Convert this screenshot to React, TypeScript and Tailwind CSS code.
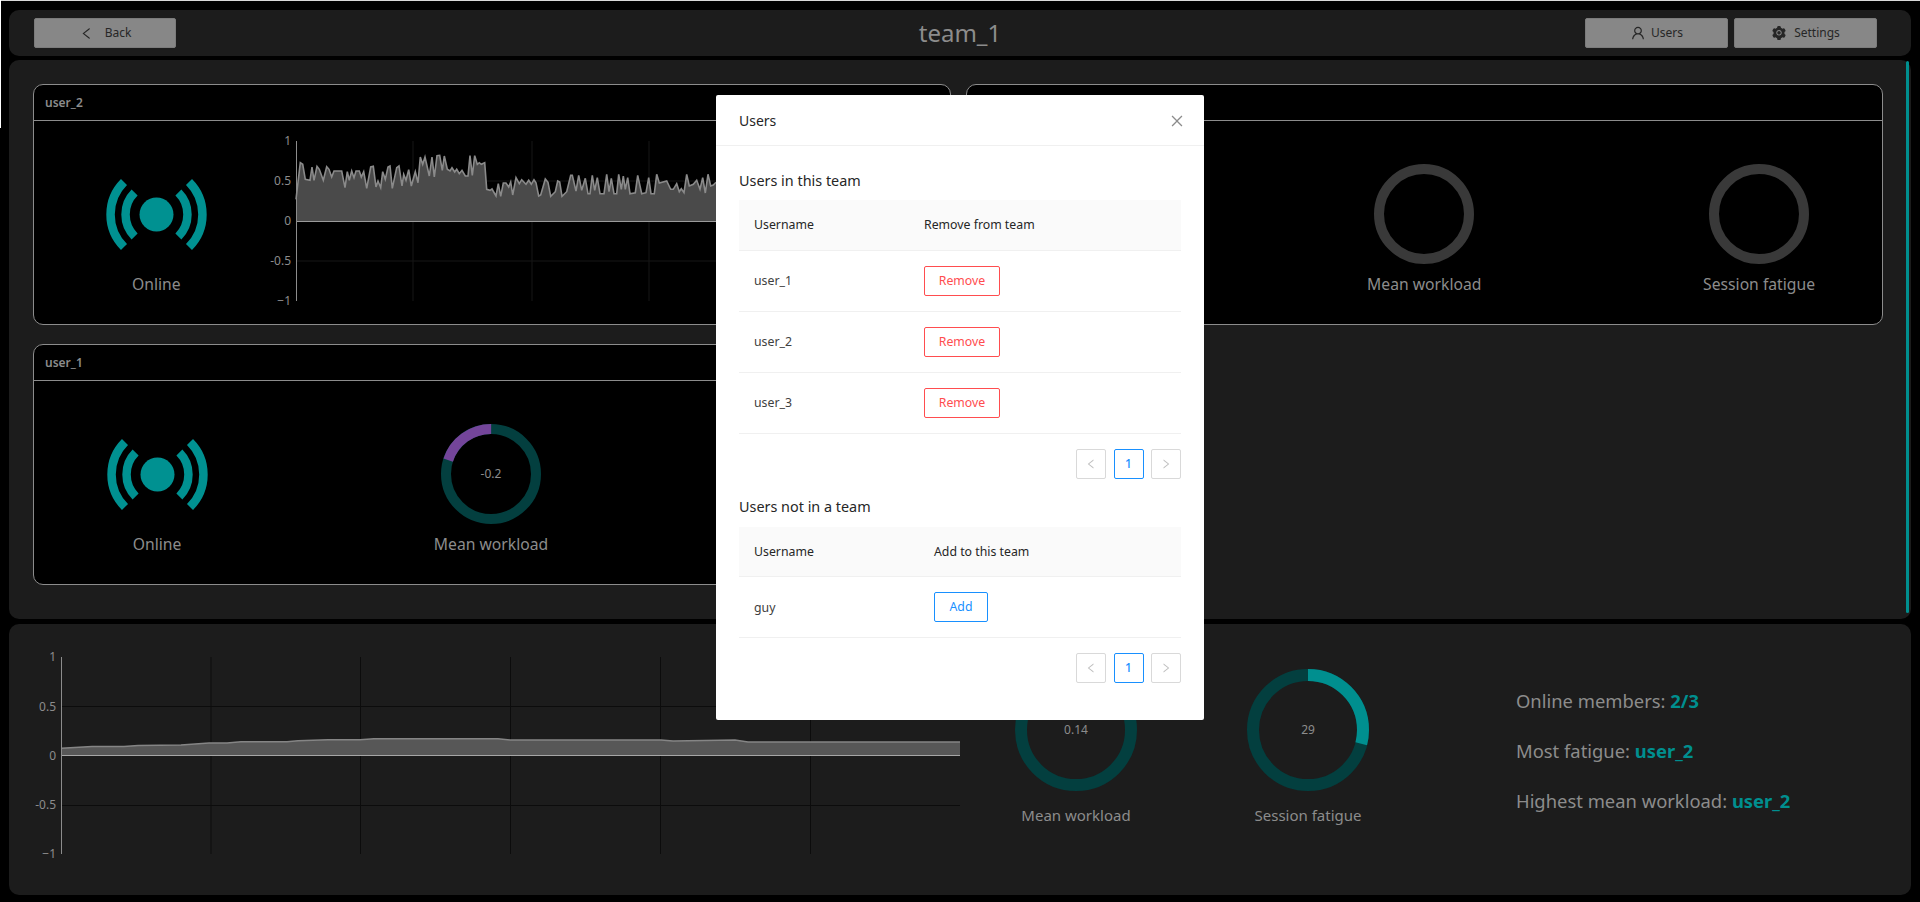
import { AiFillSetting, AiOutlineClose, AiOutlineLeft, AiOutlineRight, AiOutlineUser } from 'react-icons/ai'

const USER_2_TRACE = [
  [108, 235], [121, 125], [128, 130], [136, 175], [150, 178], [156, 138], [162, 178], [171, 136], [178, 145], [190, 178],
  [200, 137], [207, 145], [215, 168], [222, 150], [245, 150], [255, 200], [262, 152], [268, 178], [275, 150], [282, 170],
  [288, 150], [298, 150], [304, 168], [311, 152], [320, 202], [332, 138], [340, 136], [348, 198], [354, 180], [362, 200],
  [368, 152], [376, 175], [384, 138], [390, 135], [397, 202], [410, 140], [417, 135], [426, 195], [431, 160], [438, 178],
  [446, 146], [454, 195], [466, 152], [474, 185], [481, 108], [488, 130], [495, 108], [508, 165], [516, 108], [523, 168],
  [531, 104], [539, 103], [547, 148], [553, 105], [562, 145], [570, 150], [576, 140], [584, 153], [590, 145], [598, 158],
  [606, 148], [616, 165], [624, 165], [630, 104], [637, 163], [644, 104], [652, 130], [658, 125], [664, 130], [674, 125],
  [680, 205], [690, 208], [696, 204], [708, 225], [715, 188], [722, 226], [730, 186], [738, 186], [746, 198], [752, 183],
  [758, 222], [768, 170], [778, 188], [785, 176], [798, 190], [806, 178], [814, 190], [822, 176], [828, 185], [836, 225],
  [842, 222], [856, 174], [864, 184], [872, 226], [886, 212], [893, 180], [899, 183], [906, 226], [920, 212], [932, 163],
  [937, 163], [948, 210], [956, 163], [965, 208], [976, 172], [984, 218], [990, 218], [997, 163], [1004, 208], [1012, 170],
  [1020, 218], [1032, 218], [1040, 160], [1047, 212], [1054, 172], [1062, 218], [1070, 218], [1076, 160], [1084, 205], [1090, 165],
  [1096, 205], [1103, 170], [1110, 218], [1126, 215], [1133, 163], [1145, 218], [1158, 215], [1166, 170], [1173, 218], [1183, 218],
  [1190, 160], [1198, 186], [1220, 180], [1232, 205], [1240, 205], [1250, 188], [1258, 212], [1264, 203], [1272, 215], [1280, 160],
  [1288, 195], [1300, 190], [1310, 178], [1320, 205], [1328, 170], [1336, 216], [1344, 160], [1352, 195], [1360, 192], [1368, 184],
]

// traced in reference px, moved into the svg's own box below
const userPoints = USER_2_TRACE.map(([x, y]) => `${(260 + x / 3 - 279).toFixed(1)},${(120 + y / 3 - 121).toFixed(1)}`)
const userLine = userPoints.join(' ')
const userArea = `17.5,99 ${userLine} 437,99`

const TEAM_TRACE = [
  [61.5, 748.3], [92, 746.5], [124, 746.5], [138, 745.5], [181, 745], [209, 743], [227, 743], [241, 741.7], [287, 741.7], [298, 740.7],
  [328, 739.7], [360, 739.7], [374, 738.7], [498, 738.7], [510, 740], [661, 740], [673, 741], [735, 740], [748, 742], [960, 742],
]
const teamPoints = TEAM_TRACE.map(([x, y]) => `${(x - 9).toFixed(1)},${(y - 624).toFixed(1)}`)
const teamLine = teamPoints.join(' ')
const teamArea = `52.5,131 ${teamLine} 951,131`

function OnlineIcon() {
  return (
    <svg width="101" height="71" viewBox="0 0 101 71" fill="none" stroke="#009191" strokeWidth="8.5">
      <path d="M18 3A46 46 0 0 0 18 68" />
      <path d="M83 3A46 46 0 0 1 83 68" />
      <path d="M28.6 13.6A31 31 0 0 0 28.6 57.4" />
      <path d="M72.4 13.6A31 31 0 0 1 72.4 57.4" />
      <circle cx="50.5" cy="35.5" r="17" fill="#009191" stroke="none" />
    </svg>
  )
}

interface IRingProps {
  size: number
  thickness: number
  value?: number
  color?: string
  track?: string
  text?: string
}

function Ring({ size, thickness, value = 0, color = '#008f8f', track = '#033f3f', text }: IRingProps) {
  const r = (size - thickness) / 2
  const c = 2 * Math.PI * r
  const part = Math.abs(value) * c
  const rotate = value < 0 ? -90 - Math.abs(value) * 360 : -90
  return (
    <div className="relative" style={{ width: size, height: size }}>
      <svg width={size} height={size} fill="none">
        <circle cx={size / 2} cy={size / 2} r={r} stroke={track} strokeWidth={thickness} />
        {value !== 0 && (
          <circle
            cx={size / 2}
            cy={size / 2}
            r={r}
            stroke={color}
            strokeWidth={thickness}
            strokeDasharray={`${part} ${c}`}
            transform={`rotate(${rotate} ${size / 2} ${size / 2})`}
          />
        )}
      </svg>
      {text && (
        <div className="absolute inset-0 flex items-center justify-center text-[12px] text-[#8c8c8c]">{text}</div>
      )}
    </div>
  )
}

function Metric({ label, children }: { label: string; children: React.ReactNode }) {
  return (
    <div className="flex flex-col items-center pt-[43px]">
      <div className="h-[100px] flex items-center">{children}</div>
      <div className="mt-2 text-[15.7px] leading-6 text-[#8c8c8c] whitespace-nowrap">{label}</div>
    </div>
  )
}

function UserChart() {
  return (
    <svg width="671" height="203" className="block mt-px text-[12px] overflow-visible">
      {[134, 253, 370, 488].map((x) => (
        <line key={x} x1={x} x2={x} y1="19" y2="179" stroke="#161616" />
      ))}
      {[59, 139].map((y) => (
        <line key={y} x1="18" x2="671" y1={y} y2={y} stroke="#161616" />
      ))}
      <polygon points={userArea} fill="#4a4a4a" />
      <polyline points={userLine} fill="none" stroke="#8a8a8a" strokeWidth="1.6" />
      <line x1="17.5" x2="671" y1="99.5" y2="99.5" stroke="#9a9a9a" strokeWidth="1.2" />
      <line x1="17.5" x2="17.5" y1="19" y2="179" stroke="#8c8c8c" />
      {[['1', 23], ['0.5', 63], ['0', 103], ['-0.5', 143], ['−1', 183]].map(([t, y]) => (
        <text key={t} x="12" y={y} textAnchor="end" fill="#8c8c8c">
          {t}
        </text>
      ))}
    </svg>
  )
}

function TeamChart() {
  return (
    <svg width="951" height="271" className="block text-[12px] shrink-0">
      {[202, 351.5, 501.5, 651.5, 801.5].map((x) => (
        <line key={x} x1={x} x2={x} y1="33" y2="230" stroke="#0c0c0c" />
      ))}
      {[82.5, 181.5].map((y) => (
        <line key={y} x1="53" x2="951" y1={y} y2={y} stroke="#0c0c0c" />
      ))}
      <polygon points={teamArea} fill="#575757" />
      <polyline points={teamLine} fill="none" stroke="#858585" strokeWidth="1.5" />
      <line x1="52.5" x2="951" y1="131.5" y2="131.5" stroke="#a6a6a6" strokeWidth="1.2" />
      <line x1="52.5" x2="52.5" y1="33" y2="230" stroke="#8c8c8c" />
      {[['1', 37], ['0.5', 87], ['0', 136], ['-0.5', 185], ['−1', 234]].map(([t, y]) => (
        <text key={t} x="47" y={y} textAnchor="end" fill="#8c8c8c">
          {t}
        </text>
      ))}
    </svg>
  )
}

function Card({ title, children }: { title: string; children: React.ReactNode }) {
  return (
    <div className="h-[241px] rounded-[10px] border border-[#8c8c8c] bg-black">
      <div className="h-[35px] border-b border-[#8c8c8c] box-content pl-[11px] flex items-center text-[12px] font-semibold text-[#8c8c8c]">
        {title}
      </div>
      <div className="flex">{children}</div>
    </div>
  )
}

function TopButton({ icon, label, wide }: { icon: React.ReactNode; label: string; wide?: boolean }) {
  return (
    <button
      className={`h-[30px] ${wide ? 'w-[143px]' : 'w-[142px]'} rounded-[2px] border border-[#7b7b7b] bg-[#878787] flex items-center justify-center gap-2 text-[12px] text-[#262626]`}
    >
      {icon}
      {label}
    </button>
  )
}

function Pager() {
  return (
    <div className="flex justify-end gap-[7.5px] mt-[15px]">
      <div className="w-[30px] h-[30px] rounded-[2px] border border-[#d9d9d9] flex items-center justify-center text-[#bfbfbf] text-[12px]">
        <AiOutlineLeft />
      </div>
      <div className="w-[30px] h-[30px] rounded-[2px] border border-[#1890ff] flex items-center justify-center text-[#1890ff] text-[12px] font-medium">
        1
      </div>
      <div className="w-[30px] h-[30px] rounded-[2px] border border-[#d9d9d9] flex items-center justify-center text-[#bfbfbf] text-[12px]">
        <AiOutlineRight />
      </div>
    </div>
  )
}

interface IUsersTableProps {
  action: string
  firstCol: string
  rows: string[]
  button: string
  danger?: boolean
}

function UsersTable({ action, firstCol, rows, button, danger }: IUsersTableProps) {
  return (
    <table className="w-full table-fixed border-collapse text-[12.3px] text-[#262626]">
      <thead>
        <tr className="h-[50px] bg-[#fafafa] border-b border-[#f0f0f0]">
          <th className={`${firstCol} pl-[15px] pt-px text-left font-normal`}>Username</th>
          <th className="pt-px text-left font-normal">{action}</th>
        </tr>
      </thead>
      <tbody>
        {rows.map((row) => (
          <tr key={row} className="h-[61px] border-b border-[#f0f0f0]">
            <td className="pl-[15px] pt-[2px] text-[#404040]">{row}</td>
            <td>
              <button
                className={
                  danger
                    ? 'h-[30px] w-[76px] pt-px rounded-[2px] border border-[#ff4d4f] text-[#ff4d4f]'
                    : 'h-[30px] w-[54px] pt-px rounded-[2px] border border-[#1890ff] text-[#1890ff]'
                }
              >
                {button}
              </button>
            </td>
          </tr>
        ))}
      </tbody>
    </table>
  )
}

function UsersModal() {
  return (
    <div className="absolute left-[716px] top-[95px] w-[488px] h-[625px] bg-white rounded-[2px] text-[#262626]">
      <div className="h-[51px] border-b border-[#f0f0f0] px-[23px] flex items-center justify-between text-[14px]">
        Users
        <AiOutlineClose className="text-[#8c8c8c] text-[16px] mr-[-4px] mt-[2px]" />
      </div>
      <div className="px-[23px]">
        <div className="pt-[24px] mb-[8px] h-[22px] box-content leading-[22px] text-[14.4px]">Users in this team</div>
        <UsersTable
          action="Remove from team"
          firstCol="w-[185px]"
          rows={['user_1', 'user_2', 'user_3']}
          button="Remove"
          danger
        />
        <Pager />
        <div className="pt-[17px] mb-[9px] h-[22px] box-content leading-[22px] text-[14.4px]">Users not in a team</div>
        <UsersTable action="Add to this team" firstCol="w-[195px]" rows={['guy']} button="Add" />
        <Pager />
      </div>
    </div>
  )
}

export default function App() {
  return (
    <div className="relative w-full h-[902px] bg-black overflow-hidden pt-[10px] pl-[9px] pr-[9px] font-['Noto_Sans',sans-serif]">
      <div className="absolute left-0 top-0 w-full h-px bg-[#d8d8d8]" />
      <div className="absolute left-0 top-0 w-px h-[128px] bg-white" />

      <header className="h-[46px] rounded-[10px] bg-[#1c1c1c] px-[34px] grid grid-cols-[1fr_auto_1fr] items-center">
        <div className="ml-[-9px]">
          <TopButton icon={<AiOutlineLeft className="text-[15px] mr-[3px]" />} label="Back" />
        </div>
        <div className="text-[24px] leading-8 text-[#8c8c8c]">team_1</div>
        <div className="flex justify-end gap-[6px]">
          <TopButton wide icon={<AiOutlineUser className="text-[16px] mr-[-3px]" />} label="Users" />
          <TopButton wide icon={<AiFillSetting className="text-[16px] mr-[-1px]" />} label="Settings" />
        </div>
      </header>

      <main className="relative mt-[4px] h-[559px] rounded-[10px] bg-[#1c1c1c] pl-[24px] pt-[24px] pr-[28px]">
        <div className="grid grid-cols-2 gap-x-[15px] gap-y-[19px]">
          <Card title="user_2">
            <div className="w-[246px]">
              <Metric label="Online">
                <OnlineIcon />
              </Metric>
            </div>
            <UserChart />
          </Card>
          <Card title="user_3">
            <div className="w-[246px]">
              <Metric label="Offline">
                <OnlineIcon />
              </Metric>
            </div>
            <div className="w-[424px]">
              <Metric label="Mean workload">
                <Ring size={100} thickness={10} track="#393939" />
              </Metric>
            </div>
            <div className="w-[246px]">
              <Metric label="Session fatigue">
                <Ring size={100} thickness={10} track="#393939" />
              </Metric>
            </div>
          </Card>
          <Card title="user_1">
            <div className="w-[246px]">
              <Metric label="Online">
                <OnlineIcon />
              </Metric>
            </div>
            <div className="w-[422px]">
              <Metric label="Mean workload">
                <Ring size={100} thickness={10} value={-0.2} color="#74459a" text="-0.2" />
              </Metric>
            </div>
          </Card>
        </div>
        <div className="absolute right-[2px] top-px w-[3px] h-[552px] rounded-full bg-[#008f8f]" />
      </main>

      <section className="mt-[5px] h-[271px] rounded-[10px] bg-[#1c1c1c] flex">
        <TeamChart />
        <div className="w-[232px] flex flex-col items-center pt-[45px]">
          <Ring size={122} thickness={12} value={0.14} text="0.14" />
          <div className="mt-[12px] text-[15px] leading-6 text-[#8c8c8c]">Mean workload</div>
        </div>
        <div className="w-[232px] flex flex-col items-center pt-[45px]">
          <Ring size={122} thickness={12} value={0.29} text="29" />
          <div className="mt-[12px] text-[15px] leading-6 text-[#8c8c8c]">Session fatigue</div>
        </div>
        <div className="ml-[92px] pt-[63px] flex flex-col gap-[22px] text-[18.4px] leading-7 text-[#8c8c8c]">
          <div>
            Online members: <span className="font-bold text-[#008f8f]">2/3</span>
          </div>
          <div>
            Most fatigue: <span className="font-bold text-[#008f8f]">user_2</span>
          </div>
          <div>
            Highest mean workload: <span className="font-bold text-[#008f8f]">user_2</span>
          </div>
        </div>
      </section>

      <UsersModal />
    </div>
  )
}
